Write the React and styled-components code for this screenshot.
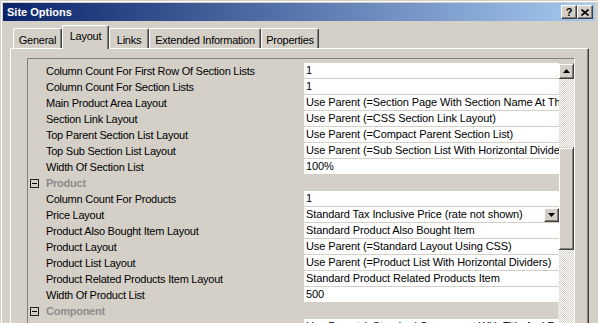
import styled, { createGlobalStyle } from "styled-components";

const GlobalStyle = createGlobalStyle`
  html, body {
    margin: 0;
    padding: 0;
    background: #d4d0c8;
  }
  body {
    font-family: "Liberation Sans", Arial, sans-serif;
    font-size: 11px;
    letter-spacing: -0.25px;
    color: #000;
  }
`;

const Window = styled.div`
  width: 598px;
  height: 323px;
  box-sizing: border-box;
  padding: 3px 3px 0;
  background: #d4d0c8;
  box-shadow: inset 1px 1px 0 #d4d0c8, inset 2px 2px 0 #ffffff;
  overflow: hidden;
  display: flex;
  flex-direction: column;
`;

const TitleBar = styled.div`
  height: 18px;
  flex: none;
  display: flex;
  align-items: center;
  justify-content: space-between;
  padding: 0 2px 0 4px;
  background: linear-gradient(to right, #0a246a, #a6caf0);
  color: #fff;
  font-weight: bold;
  letter-spacing: 0;
`;

const TitleButtons = styled.div`
  display: flex;
`;

const CaptionButton = styled.div`
  width: 16px;
  height: 14px;
  box-sizing: border-box;
  background: #d4d0c8;
  border-top: 1px solid #fff;
  border-left: 1px solid #fff;
  border-right: 1px solid #404040;
  border-bottom: 1px solid #404040;
  box-shadow: inset -1px -1px 0 #808080;
  color: #000;
  font-size: 11px;
  font-weight: bold;
  line-height: 12px;
  display: flex;
  align-items: center;
  justify-content: center;
`;

const TabRow = styled.div`
  height: 27px;
  flex: none;
  display: flex;
  align-items: flex-end;
  padding-left: 10px;
  position: relative;
  z-index: 1;
`;

const Tab = styled.div`
  width: ${({ width }) => width}px;
  height: ${({ active }) => (active ? 24 : 20)}px;
  margin-bottom: ${({ active }) => (active ? -1 : 0)}px;
  box-sizing: border-box;
  background: #d4d0c8;
  border-top: 1px solid #fff;
  border-left: 1px solid #fff;
  border-right: 1px solid #404040;
  border-radius: 2px 2px 0 0;
  box-shadow: inset -1px 0 0 #808080;
  display: flex;
  justify-content: center;
  padding-top: ${({ active }) => (active ? 4 : 5)}px;
  white-space: nowrap;
`;

const Panel = styled.div`
  flex: 1;
  min-height: 0;
  margin: 0 6px 0 7px;
  padding: 9px 13px 0 16px;
  border-top: 1px solid #fff;
  border-left: 1px solid #fff;
  border-right: 1px solid #404040;
  box-shadow: inset -1px 0 0 #808080;
  display: flex;
`;

const GridFrame = styled.div`
  flex: 1;
  border-top: 1px solid #808080;
  border-left: 1px solid #808080;
  border-right: 1px solid #fff;
  padding-top: 4px;
  display: flex;
  align-items: flex-start;
`;

const GridBody = styled.div`
  width: 530px;
  flex: none;
  display: flex;
  flex-direction: column;
`;

const Row = styled.div`
  height: 16px;
  display: grid;
  grid-template-columns: 15px 259px 255px;
  column-gap: 1px;
`;

const Label = styled.div`
  padding-left: 2px;
  line-height: 16px;
  white-space: nowrap;
  overflow: hidden;
`;

const Value = styled.div`
  position: relative;
  height: 15px;
  background: #fff;
  border-bottom: 1px solid #d4d0c8;
  padding-left: 2px;
  line-height: 15px;
  letter-spacing: -0.1px;
  white-space: nowrap;
  overflow: hidden;
`;

const Gutter = styled.div`
  display: flex;
  align-items: center;
  padding-left: 2px;
`;

const MinusBox = styled.div`
  width: 9px;
  height: 9px;
  box-sizing: border-box;
  border: 1px solid #202020;
  display: flex;
  align-items: center;
  justify-content: center;

  &::after {
    content: "";
    width: 5px;
    height: 1px;
    background: #000;
  }
`;

const CategoryLabel = styled.div`
  grid-column: 2 / 4;
  padding-left: 2px;
  line-height: 16px;
  font-weight: bold;
  color: #8c8c8c;
`;

const DropButton = styled.div`
  position: absolute;
  right: 0;
  top: 1px;
  width: 15px;
  height: 14px;
  box-sizing: border-box;
  background: #d4d0c8;
  border-top: 1px solid #fff;
  border-left: 1px solid #fff;
  border-right: 1px solid #404040;
  border-bottom: 1px solid #404040;
  box-shadow: inset -1px -1px 0 #808080;
  display: flex;
  align-items: center;
  justify-content: center;
`;

const ScrollBar = styled.div`
  width: 16px;
  flex: none;
  align-self: stretch;
  display: flex;
  flex-direction: column;
`;

const ScrollButton = styled.div`
  height: 16px;
  flex: none;
  box-sizing: border-box;
  background: #d4d0c8;
  border-top: 1px solid #d4d0c8;
  border-left: 1px solid #d4d0c8;
  border-right: 1px solid #404040;
  border-bottom: 1px solid #404040;
  box-shadow: inset 1px 1px 0 #fff, inset -1px -1px 0 #808080;
  display: flex;
  align-items: center;
  justify-content: center;
`;

const Track = styled.div`
  flex: ${({ size }) => (size ? `0 0 ${size}px` : "1")};
  background: repeating-conic-gradient(#ffffff 0 25%, #d4d0c8 0 50%) 0 0 / 2px 2px;
`;

const Thumb = styled(ScrollButton)`
  height: ${({ size }) => size}px;
`;

const Arrow = ({ up }) => (
  <svg width="7" height="4" viewBox="0 0 7 4">
    <path d={up ? "M3.5 0 L7 4 L0 4 Z" : "M0 0 L7 0 L3.5 4 Z"} fill="#000" />
  </svg>
);

const CloseGlyph = () => (
  <svg width="8" height="7" viewBox="0 0 8 7">
    <path d="M0.5 0.5 L7.5 6.5 M7.5 0.5 L0.5 6.5" stroke="#000" strokeWidth="1.6" />
  </svg>
);

const tabs = [
  { label: "General", width: 49 },
  { label: "Layout", width: 47, active: true },
  { label: "Links", width: 40 },
  { label: "Extended Information", width: 112 },
  { label: "Properties", width: 58 },
];

const rows = [
  { label: "Column Count For First Row Of Section Lists", value: "1" },
  { label: "Column Count For Section Lists", value: "1" },
  { label: "Main Product Area Layout", value: "Use Parent (=Section Page With Section Name At The Top)" },
  { label: "Section Link Layout", value: "Use Parent (=CSS Section Link Layout)" },
  { label: "Top Parent Section List Layout", value: "Use Parent (=Compact Parent Section List)" },
  { label: "Top Sub Section List Layout", value: "Use Parent (=Sub Section List With Horizontal Dividers)" },
  { label: "Width Of Section List", value: "100%" },
  { category: "Product" },
  { label: "Column Count For Products", value: "1" },
  { label: "Price Layout", value: "Standard Tax Inclusive Price (rate not shown)", dropdown: true },
  { label: "Product Also Bought Item Layout", value: "Standard Product Also Bought Item" },
  { label: "Product Layout", value: "Use Parent (=Standard Layout Using CSS)" },
  { label: "Product List Layout", value: "Use Parent (=Product List With Horizontal Dividers)" },
  { label: "Product Related Products Item Layout", value: "Standard Product Related Products Item" },
  { label: "Width Of Product List", value: "500" },
  { category: "Component" },
  { label: "Component Layout", value: "Use Parent (=Standard Component With Title And Description)" },
];

const App = () => (
  <>
    <GlobalStyle />
    <Window>
      <TitleBar>
        <span>Site Options</span>
        <TitleButtons>
          <CaptionButton>?</CaptionButton>
          <CaptionButton>
            <CloseGlyph />
          </CaptionButton>
        </TitleButtons>
      </TitleBar>
      <TabRow>
        {tabs.map((tab) => (
          <Tab key={tab.label} width={tab.width} active={tab.active}>
            {tab.label}
          </Tab>
        ))}
      </TabRow>
      <Panel>
        <GridFrame>
          <GridBody>
            {rows.map((row, index) =>
              row.category ? (
                <Row key={index}>
                  <Gutter>
                    <MinusBox />
                  </Gutter>
                  <CategoryLabel>{row.category}</CategoryLabel>
                </Row>
              ) : (
                <Row key={index}>
                  <div />
                  <Label>{row.label}</Label>
                  <Value>
                    {row.value}
                    {row.dropdown && (
                      <DropButton>
                        <Arrow />
                      </DropButton>
                    )}
                  </Value>
                </Row>
              )
            )}
          </GridBody>
          <ScrollBar>
            <ScrollButton>
              <Arrow up />
            </ScrollButton>
            <Track size={68} />
            <Thumb size={103} />
            <Track />
          </ScrollBar>
        </GridFrame>
      </Panel>
    </Window>
  </>
);

export default App;
